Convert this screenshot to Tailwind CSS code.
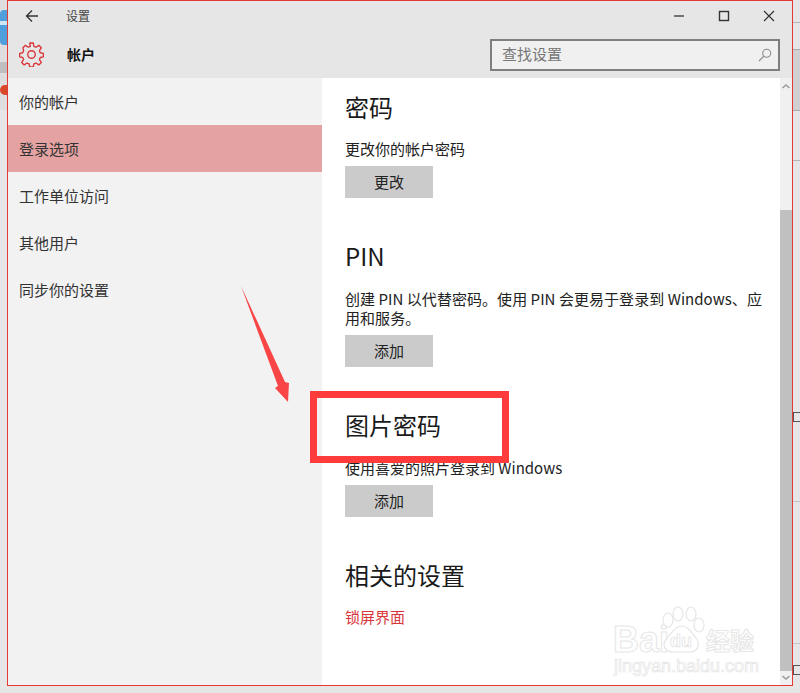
<!DOCTYPE html>
<html lang="zh-CN">
<head>
  <meta charset="UTF-8">
  <title>设置</title>
  <script src="https://cdn.jsdelivr.net/npm/@tailwindcss/browser@4"></script>
</head>
<body class="relative w-[800px] h-[693px] overflow-hidden bg-[#e6e6e6] font-['Noto_Sans_CJK_SC','Noto_Sans',sans-serif] text-[15px] text-[#222]">
  <!-- desktop behind the window -->
  <div class="absolute left-0 top-0 w-[7px] h-[110px] bg-[#dedede]"></div>
  <div class="absolute left-0 top-[10px] w-[7px] h-[35px] rounded-l-[4px] bg-[#4f9fdc]"></div>
  <div class="absolute left-0 top-[21px] w-[7px] h-[4px] bg-[#cfe6f5]"></div>
  <div class="absolute left-0 top-[62px] w-[7px] h-[11px] bg-[#8f8f8f]/40"></div>
  <div class="absolute left-0 top-[85px] w-[7px] h-[10px] rounded-l-full bg-[#d9482b]"></div>
  <div class="absolute left-[793px] top-[22px] w-[7px] h-px bg-[#b5b5b5]"></div>
  <div class="absolute left-[793px] top-[49px] w-[7px] h-[62px] border-y border-[#a8a8a8] bg-[#d0d0d0]"></div>
  <div class="absolute left-[793px] top-[160px] w-[7px] h-px bg-[#b5b5b5]"></div>
  <div class="absolute left-[793px] top-[412px] w-[7px] h-[10px] border border-r-0 border-[#555]"></div>
  <div class="absolute left-[793px] top-[501px] w-[7px] h-px bg-[#c5c5c5]"></div>
  <div class="absolute left-[793px] top-[643px] w-[7px] h-px bg-[#c5c5c5]"></div>
  <div class="absolute left-[793px] top-[665px] w-[7px] h-[10px] border border-r-0 border-[#555]"></div>

  <!-- settings window -->
  <div class="absolute left-[7px] top-0 w-[786px] h-[686px] border border-[#e53935] bg-white flex flex-col">
    <header class="h-[77px] bg-[#e6e6e6] relative shrink-0">
      <div class="h-[30px] flex items-center">
        <svg class="ml-[17px] w-[14px] h-[14px]" viewBox="0 0 14 14" fill="none" stroke="#333" stroke-width="1.3"><path d="M13 7H1.5M7 1.5 1.5 7 7 12.5"/></svg>
        <span class="ml-[27px] text-[12px] leading-none text-[#444]">设置</span>
        <div class="ml-auto flex items-center">
          <svg class="w-[12px] h-[12px]" viewBox="0 0 12 12" stroke="#333" stroke-width="1.3"><path d="M1 6h10"/></svg>
          <svg class="ml-[33px] w-[12px] h-[12px]" viewBox="0 0 12 12" fill="none" stroke="#333" stroke-width="1.4"><rect x="1.5" y="1.5" width="9" height="9"/></svg>
          <svg class="ml-[33px] mr-[17px] w-[12px] h-[12px]" viewBox="0 0 12 12" stroke="#333" stroke-width="1.2"><path d="M1 1l10 10M11 1 1 11"/></svg>
        </div>
      </div>
      <div class="h-[47px] flex items-start">
        <svg class="ml-[11px] mt-[11px] w-[25px] h-[25px]" viewBox="0 0 24 24" fill="none" stroke="#d9363a" stroke-width="1.3" stroke-linejoin="round"><circle cx="12" cy="12" r="3.6"/><path d="M10.3 1.5h3.4l.6 3.2 2 .8 2.7-1.8 2.4 2.4-1.8 2.7.8 2 3 .6v3.4l-3 .6-.8 2 1.8 2.7-2.4 2.4-2.7-1.8-2 .8-.6 3h-3.4l-.6-3-2-.8-2.7 1.8-2.4-2.4 1.8-2.7-.8-2-3-.6v-3.4l3-.6.8-2L3.8 6.1l2.4-2.4 2.7 1.8 2-.8z" transform="translate(0 -.5)"/></svg>
        <span class="ml-[23px] mt-[12px] text-[14px] leading-[22px] font-bold text-[#111]">帐户</span>
        <div class="ml-auto mr-[12px] mt-[8px] w-[290px] h-[32px] border-2 border-[#7f7f7f] bg-[#f0f0f0] flex items-center pl-[10px] pr-[6px] text-[#777] text-[15px]">
          <span class="-mt-[1px]">查找设置</span>
          <svg class="ml-auto w-[14px] h-[14px]" viewBox="0 0 14 14" fill="none" stroke="#8a8a8a" stroke-width="1.1"><circle cx="8.7" cy="5.3" r="4"/><path d="M5.8 8.2 1 13"/></svg>
        </div>
      </div>
    </header>

    <div class="flex-1 flex min-h-0">
      <nav class="w-[314px] bg-[#f2f2f2] shrink-0">
        <div class="h-[47px] flex items-center pl-[11px] pt-[2px] text-[#333]">你的帐户</div>
        <div class="h-[47px] flex items-center pl-[11px] pt-[2px] text-[#333] bg-[#e4a2a2]">登录选项</div>
        <div class="h-[47px] flex items-center pl-[11px] pt-[2px] text-[#333]">工作单位访问</div>
        <div class="h-[47px] flex items-center pl-[11px] pt-[2px] text-[#333]">其他用户</div>
        <div class="h-[47px] flex items-center pl-[11px] pt-[2px] text-[#333]">同步你的设置</div>
      </nav>

      <main class="flex-1 pl-[23px] pt-[12px]">
        <h2 class="text-[24px] leading-[34px] text-[#1a1a1a]">密码</h2>
        <p class="mt-[14px] leading-[22px]">更改你的帐户密码</p>
        <button class="mt-[6px] block w-[88px] h-[32px] bg-[#cbcbcb] text-center text-[#222]">更改</button>

        <h2 class="mt-[41px] text-[24px] leading-[34px] text-[#1a1a1a]">PIN</h2>
        <p class="mt-[16px] w-[420px] leading-[19px] tracking-[0.05px]">创建 PIN 以代替密码。使用 PIN 会更易于登录到 Windows、应用和服务。</p>
        <button class="mt-[8px] block w-[88px] h-[32px] bg-[#cbcbcb] text-center text-[#222]">添加</button>

        <h2 class="mt-[41px] text-[24px] leading-[34px] text-[#1a1a1a]">图片密码</h2>
        <p class="mt-[15px] leading-[22px]">使用喜爱的照片登录到 Windows</p>
        <button class="mt-[6px] block w-[88px] h-[32px] bg-[#cbcbcb] text-center text-[#222]">添加</button>

        <h2 class="mt-[41px] text-[24px] leading-[34px] text-[#1a1a1a]">相关的设置</h2>
        <a class="mt-[14px] block leading-[22px] text-[#d9363a]">锁屏界面</a>
      </main>

      <div class="w-[12px] bg-[#f0f0f0] shrink-0 flex flex-col">
        <svg class="mt-[4px] w-[12px] h-[8px] shrink-0" viewBox="0 0 12 8" fill="none" stroke="#9a9a9a" stroke-width="1.5"><path d="M2.5 6 6 3l3.5 3"/></svg>
        <div class="mt-[120px] flex-1 bg-[#c0c0c0]"></div>
        <svg class="my-[3px] w-[12px] h-[8px] shrink-0" viewBox="0 0 12 8" fill="none" stroke="#9a9a9a" stroke-width="1.5"><path d="M2.5 2 6 5l3.5-3"/></svg>
      </div>
    </div>
  </div>

  <!-- annotations on top of the screenshot -->
  <div class="absolute left-[310px] top-[391px] w-[199px] h-[72px] border-[7px] border-[#ff3b3b]"></div>
  <svg class="absolute left-0 top-0" width="800" height="693"><polygon points="241,286 285,382 289,383 288,402 275,388 278,386" fill="#f94545"/></svg>

  <!-- watermark -->
  <div class="absolute left-[613px] top-[624px] text-[36px] leading-[31px] font-bold font-['Liberation_Sans',sans-serif] text-white [-webkit-text-stroke:1px_#e6e6e6]">Bai</div>
  <svg class="absolute left-[660px] top-[606px]" width="46" height="50" viewBox="0 0 46 50" fill="white" stroke="#e6e6e6" stroke-width="1.2">
    <ellipse cx="8" cy="14" rx="5" ry="7"/><ellipse cx="18" cy="8" rx="5" ry="7"/><ellipse cx="31" cy="8" rx="5" ry="7"/><ellipse cx="39" cy="19" rx="5" ry="7"/>
    <path d="M22 20c6 0 9 6 14 12 5 7 1 14-6 14H13C5 46 1 39 7 32c5-5 8-12 15-12z"/>
  </svg>
  <div class="absolute left-[670px] top-[632px] text-[18px] leading-[18px] font-bold font-['Liberation_Sans',sans-serif] text-white [-webkit-text-stroke:.7px_#e0e0e0]">du</div>
  <div class="absolute left-[706px] top-[627px] text-[24px] leading-[26px] font-bold text-white [-webkit-text-stroke:1px_#e6e6e6]">经验</div>
  <div class="absolute left-[614px] top-[656px] text-[18px] leading-[20px] font-['Liberation_Sans',sans-serif] text-white [-webkit-text-stroke:.7px_#e4e4e4]">jingyan.baidu.com</div>
</body>
</html>
